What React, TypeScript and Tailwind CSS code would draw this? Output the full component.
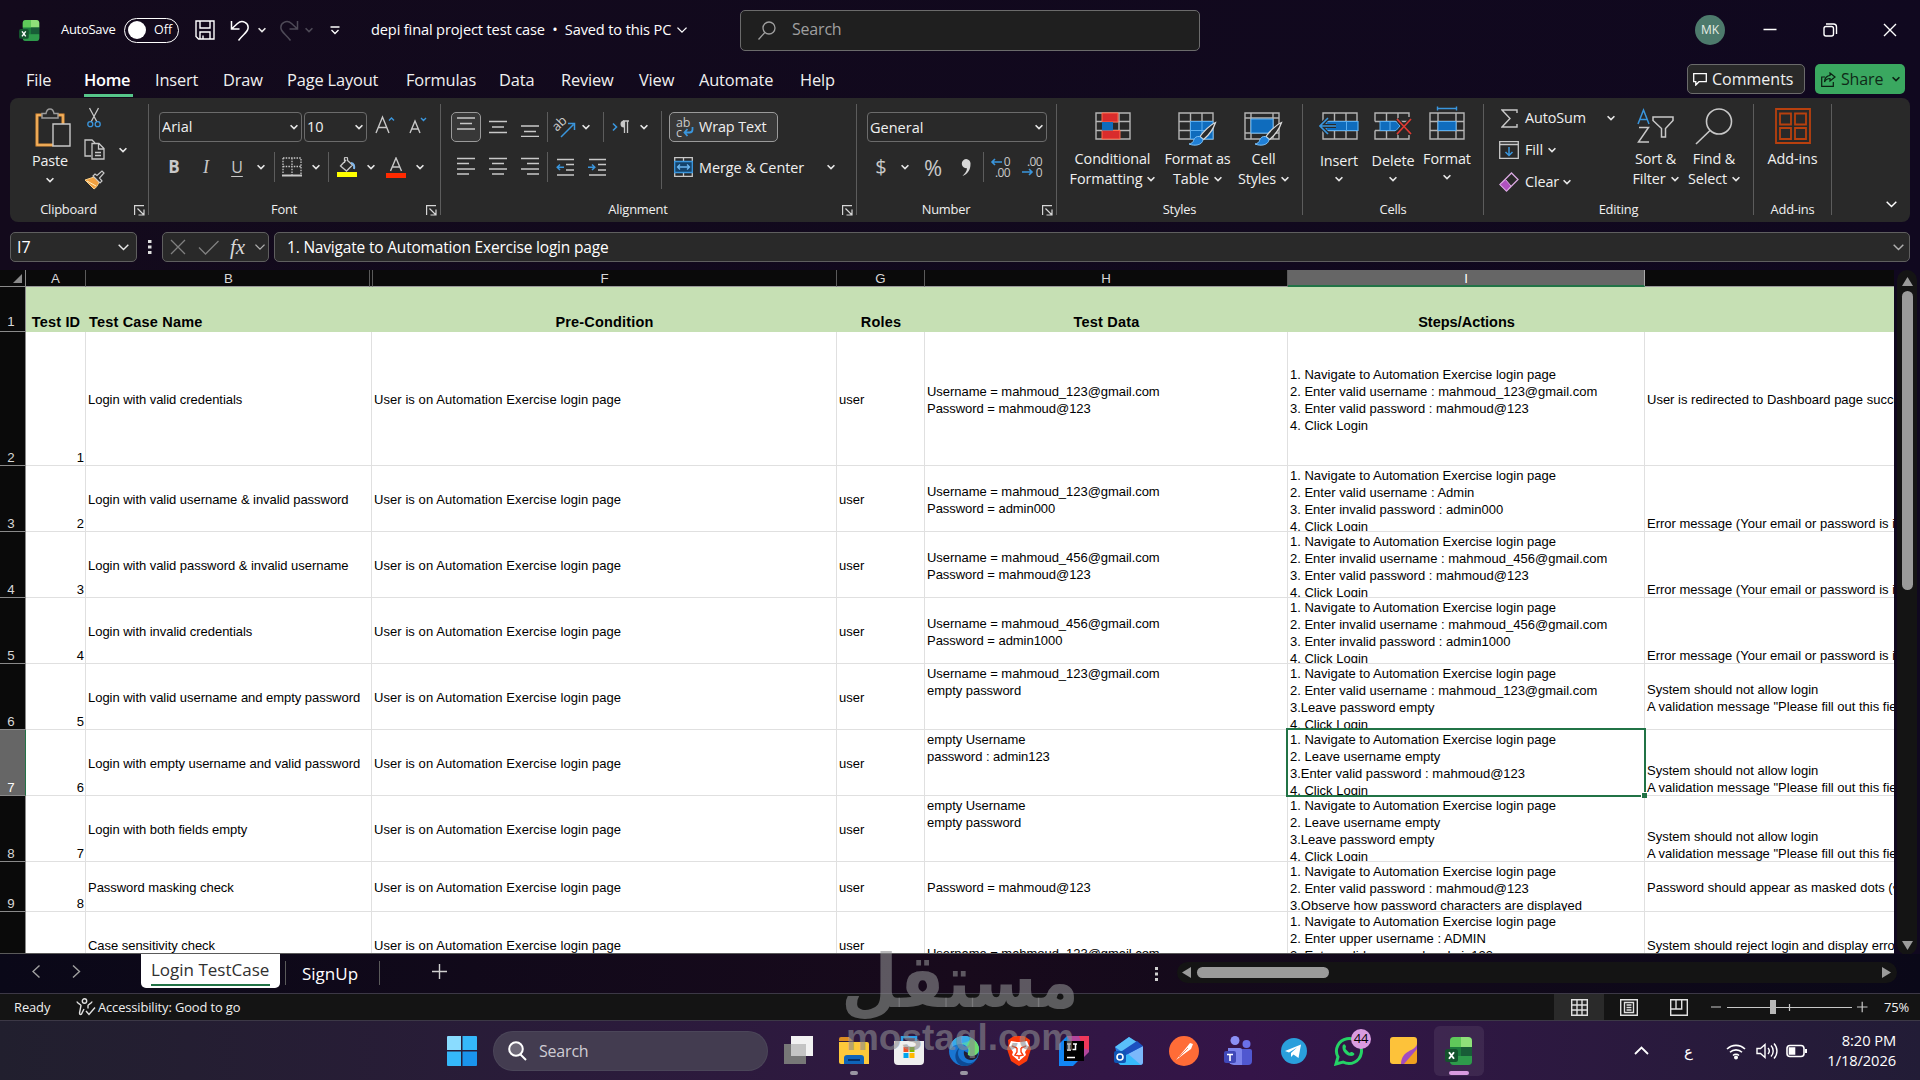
import type { ReactNode } from "react";

const ui = "font-['Open_Sans','Noto_Sans',sans-serif]";

const Chevron = ({ className = "", size = 8, stroke = "#e8e8e8" }: { className?: string; size?: number; stroke?: string }) => (
  <svg width={size} height={size / 2 + 2} viewBox="0 0 8 6" className={`shrink-0 ${className}`} fill="none" stroke={stroke} strokeWidth={size > 10 ? 1 : 1.6}>
    <path d="M0.6 1.2 4 4.6 7.4 1.2" />
  </svg>
);

/* ---------- ribbon building blocks ---------- */

const Group = ({ label, launcher, className, children }: { label: string; launcher?: boolean; className: string; children: ReactNode }) => (
  <section className={`flex flex-col shrink-0 h-[124px] ${className}`}>
    <div className="flex h-full">
      <div className="flex flex-col flex-1">
        <div className="flex h-[101px]">{children}</div>
        <div className="flex h-[23px] items-start text-[12.9px] leading-[21px] tracking-[-0.2px]">
          <span className="flex-1 text-center">{label}</span>
          {launcher && (
            <svg width="11" height="11" viewBox="0 0 11 11" className="ml-[7px] mr-[3px] mt-[6px]" fill="none" stroke="#d6d6d6" strokeWidth="1.2">
              <path d="M0.6 10V0.6H10M3.5 3.5 9.5 9.5M10 4.5V10H4.5" />
            </svg>
          )}
        </div>
      </div>
      <div className="w-px h-[111px] mt-[6px] bg-[#5c5c5c]" />
    </div>
  </section>
);

const Box = ({ w, children }: { w: string; children?: ReactNode }) => (
  <span className={`flex items-center justify-center shrink-0 h-[30px] ${w}`}>{children}</span>
);

const Sep = () => <span className="w-px h-[30px] shrink-0 bg-[#5c5c5c]" />;

const Lines = ({ rows }: { rows: number[][] }) => (
  <svg width="20" height="20" viewBox="0 0 20 20" stroke="#c8c8c8" strokeWidth="1.5">
    {rows.map(([x1, x2, y], i) => <path key={i} d={`M${x1} ${y}H${x2}`} />)}
  </svg>
);

const Big = ({ w, icon, lines, arrowBelow }: { w: string; icon: ReactNode; lines: string[]; arrowBelow?: string }) => (
  <div className={`flex flex-col items-center shrink-0 text-[14.4px] leading-[20px] tracking-[-0.1px] ${w}`}>
    <div className="h-[51px] flex items-end justify-center pb-[2px]">{icon}</div>
    <div className={`whitespace-nowrap ${arrowBelow ?? ""}`}>{lines[0]}</div>
    {arrowBelow ? (
      <Chevron className="mt-[5px]" />
    ) : (
      lines[1] && (
        <div className="flex items-center gap-[5px] whitespace-nowrap">
          {lines[1]}
          <Chevron />
        </div>
      )
    )}
  </div>
);

/* ---------- icons ---------- */

const ExcelLogo = ({ size }: { size: number }) => (
  <svg width={size} height={size} viewBox="0 0 28 28">
    <rect x="5" y="0" width="22" height="28" rx="4" fill="#1b7a3c" />
    <path d="M5 10V4a4 4 0 0 1 4-4h7v10z" fill="#5fc95a" />
    <path d="M16 0h7a4 4 0 0 1 4 4v6H16z" fill="#8fe07a" />
    <path d="M16 10h11v9H16z" fill="#185c37" />
    <path d="M5 19h22v5a4 4 0 0 1-4 4H9a4 4 0 0 1-4-4z" fill="#2e9a4b" />
    <rect x="0" y="12" width="13" height="13" rx="2.5" fill="#14532d" />
    <path d="M4 15.2l5 6.6M9 15.2l-5 6.6" stroke="#fff" strokeWidth="1.9" />
  </svg>
);

const TableGrid = () => (
  <path d="M1 1h34v26H1zM1 9.5h34M1 18.5h34M12.5 1v26M24 1v26" fill="none" stroke="#b4b4b4" strokeWidth="1.4" />
);

const Brush = () => (
  <g>
    <path d="M37.5 10.5c-5 2-12 9-15.500 14l3.500 3c5-4 10-11 12-17z" fill="#292929" stroke="#d8d8d8" strokeWidth="1.3" />
    <path d="M21.5 24.5c-3-.5-5 1-6 4-.5 2-2 3-4.500 3.500 6 2.500 13.500 1 14-4.500z" fill="#1f7fd6" stroke="#7cc0f5" strokeWidth="1" />
  </g>
);

const PasteIcon = () => (
  <svg width="36" height="40" viewBox="0 0 36 40" fill="none">
    <path d="M9 7H2v30h16M21 7h7v9" stroke="#e8953a" strokeWidth="3" />
    <path d="M9 7H2v30h16M21 7h7v9" stroke="#f8cf8a" strokeWidth="0.7" />
    <path d="M7 10h16V5.5h-4C18.5 2.5 17 1 15 1s-3.500 1.500-4 4.500H7z" fill="#292929" stroke="#9a9a9a" strokeWidth="1.5" />
    <path d="M18 16h17v22H18z" fill="#292929" stroke="#c8c8c8" strokeWidth="1.4" />
  </svg>
);

const CutIcon = () => (
  <svg width="14" height="21" viewBox="0 0 14 21" fill="none" strokeWidth="1.3">
    <path d="M2.5 1 10 15M11.5 1 4 15" stroke="#c8c8c8" />
    <circle cx="3.3" cy="17.2" r="2.5" stroke="#3a96dd" />
    <circle cx="10.7" cy="17.2" r="2.5" stroke="#3a96dd" />
  </svg>
);

const CopyIcon = () => (
  <svg width="21" height="21" viewBox="0 0 21 21" fill="none" stroke="#c8c8c8" strokeWidth="1.3">
    <path d="M7 17H1V1h7l3 3" />
    <path d="M8 4.5h7l5 5V20H8zM14.5 4.5V10H20M11 13.5h6M11 16.5h6" />
  </svg>
);

const PainterIcon = () => (
  <svg width="21" height="20" viewBox="0 0 21 20" fill="none">
    <path d="M1 10l9-3 5 5c-1 3-3 6-5 7z" fill="#f0a040" stroke="#f8d08a" />
    <path d="M3 11l9 5" stroke="#fff0c0" />
    <path d="M9 6l7 7 2-2-2.500-3L20 3l-2-2-5 4.500L11 4z" fill="#292929" stroke="#c8c8c8" strokeWidth="1.2" />
  </svg>
);

const BordersIcon = () => (
  <svg width="20" height="20" viewBox="0 0 20 20" fill="none" stroke="#c8c8c8">
    <path d="M1 1h18v16M1 1v16M10 1v17M1 9.5h18" strokeDasharray="1.5 1.2" strokeWidth="1.3" />
    <path d="M0 18.5h20" strokeWidth="2" />
  </svg>
);

const FillIcon = () => (
  <svg width="20" height="20" viewBox="0 0 20 20" fill="none" stroke="#c8c8c8" strokeWidth="1.3">
    <path d="M9 3 3.5 9l6 5 6-6-5-4.500V1.500a1.500 1.500 0 0 0-3 0V6" />
    <path d="M14 6c3 0 3.500 3 3 6" stroke="#7fb8ee" strokeWidth="2" />
    <path d="M0 17.500h20" stroke="#ffff00" strokeWidth="5" />
  </svg>
);

const IndentIcon = ({ d }: { d: string }) => (
  <svg width="19" height="19" viewBox="0 0 19 19" fill="none" strokeWidth="1.5">
    <path d="M1 1.5h17M10 6.5h8M10 12h8M1 17h17" stroke="#c8c8c8" />
    <path d={d} stroke="#3a96dd" />
  </svg>
);

const DecimalIcon = ({ top, bottom, arrow }: { top: string; bottom: string; arrow: string }) => (
  <svg width="21" height="22" viewBox="0 0 21 22" className="overflow-visible" fill="#c8c8c8" fontFamily="Open Sans" fontSize="12" letterSpacing="-0.6">
    <text x="20" y="10" textAnchor="end">{top}</text>
    <text x="20" y="20.500" textAnchor="end">{bottom}</text>
    <path d={arrow} fill="none" stroke="#3a96dd" strokeWidth="1.6" />
  </svg>
);

/* ---------- sheet data ---------- */

type Row = {
  n: string;
  h: string;
  id: string;
  name: string;
  data: string;
  steps: string;
  result: string;
  dataAlign?: string;
  stepsAlign?: string;
  resultAlign?: string;
};

const pre = "User is on Automation Exercise login page";
const nav = "1. Navigate to Automation Exercise login page\n";

const rows: Row[] = [
  { n: "2", h: "h-[134px]", id: "1", name: "Login with valid credentials", data: "Username = mahmoud_123@gmail.com\nPassword = mahmoud@123", steps: nav + "2. Enter valid username : mahmoud_123@gmail.com\n3. Enter valid password : mahmoud@123\n4. Click Login", result: "User is redirected to Dashboard page successfully", stepsAlign: "items-center" },
  { n: "3", h: "h-[66px]", id: "2", name: "Login with valid username & invalid password", data: "Username = mahmoud_123@gmail.com\nPassword = admin000", steps: nav + "2. Enter valid username : Admin\n3. Enter invalid password : admin000\n4. Click Login", result: "Error message (Your email or password is incorrect)", resultAlign: "items-end" },
  { n: "4", h: "h-[66px]", id: "3", name: "Login with valid password & invalid username", data: "Username = mahmoud_456@gmail.com\nPassword = mahmoud@123", steps: nav + "2. Enter invalid username : mahmoud_456@gmail.com\n3. Enter valid password : mahmoud@123\n4. Click Login", result: "Error message (Your email or password is incorrect)", resultAlign: "items-end" },
  { n: "5", h: "h-[66px]", id: "4", name: "Login with invalid credentials", data: "Username = mahmoud_456@gmail.com\nPassword = admin1000", steps: nav + "2. Enter invalid username : mahmoud_456@gmail.com\n3. Enter invalid password : admin1000\n4. Click Login", result: "Error message (Your email or password is incorrect)", resultAlign: "items-end" },
  { n: "6", h: "h-[66px]", id: "5", name: "Login with valid username and empty password", data: "Username = mahmoud_123@gmail.com\nempty password", steps: nav + "2. Enter valid username : mahmoud_123@gmail.com\n3.Leave password empty\n4. Click Login", result: 'System should not allow login\nA validation message "Please fill out this field"', dataAlign: "items-start" },
  { n: "7", h: "h-[66px]", id: "6", name: "Login with empty username and valid password", data: "empty Username\npassword : admin123", steps: nav + "2. Leave username empty\n3.Enter valid password : mahmoud@123\n4. Click Login", result: 'System should not allow login\nA validation message "Please fill out this field"', dataAlign: "items-start", resultAlign: "items-end" },
  { n: "8", h: "h-[66px]", id: "7", name: "Login with both fields empty", data: "empty Username\nempty password", steps: nav + "2. Leave username empty\n3.Leave password empty\n4. Click Login", result: 'System should not allow login\nA validation message "Please fill out this field"', dataAlign: "items-start", resultAlign: "items-end" },
  { n: "9", h: "h-[50px]", id: "8", name: "Password masking check", data: "Password = mahmoud@123", steps: nav + "2. Enter valid password : mahmoud@123\n3.Observe how password characters are displayed", result: "Password should appear as masked dots (•••)" },
  { n: "", h: "h-[66px]", id: "", name: "Case sensitivity check", data: "Username = mahmoud_123@gmail.com", steps: nav + "2. Enter upper username : ADMIN\n3. Enter valid password : admin123", result: "System should reject login and display error", dataAlign: "items-end pb-[16px]" },
];

const Cell = ({ w, align = "items-center", children }: { w: string; align?: string; children?: ReactNode }) => (
  <div className={`flex shrink-0 overflow-hidden border-r border-b border-[#e0e0e0] pl-[2px] whitespace-pre ${w} ${align}`}>
    <span className="translate-y-px">{children}</span>
  </div>
);

const headings = [
  { t: "Test ID", c: "w-[60px] text-center" },
  { t: "Test Case Name", c: "w-[286px] pl-[3px]" },
  { t: "Pre-Condition", c: "w-[465px] text-center" },
  { t: "Roles", c: "w-[88px] text-center" },
  { t: "Test Data", c: "w-[363px] text-center" },
  { t: "Steps/Actions", c: "w-[357px] text-center tracking-normal" },
];

const columns = [
  { t: "A", c: "w-[60px]" },
  { t: "B", c: "w-[284px] pl-[2px]" },
  { t: "", c: "w-[3px]" },
  { t: "F", c: "w-[464px]" },
  { t: "G", c: "w-[88px]" },
  { t: "H", c: "w-[363px]" },
];

const menu = [
  { t: "File", w: "w-[58px]" },
  { t: "Home", w: "w-[71px]" },
  { t: "Insert", w: "w-[68px]" },
  { t: "Draw", w: "w-[64px]" },
  { t: "Page Layout", w: "w-[119px]" },
  { t: "Formulas", w: "w-[93px]" },
  { t: "Data", w: "w-[62px]" },
  { t: "Review", w: "w-[78px]" },
  { t: "View", w: "w-[60px]" },
  { t: "Automate", w: "w-[101px]" },
  { t: "Help", w: "w-[60px]" },
];

function TitleBar() {
  return (
    <header className="flex items-center h-[60px] pl-[19px] text-[14px] text-white">
      <ExcelLogo size={21} />
      <span className="ml-[21px] w-[63px] text-[13px] tracking-[-0.3px]">AutoSave</span>
      <span className="flex items-center w-[55px] h-[25px] rounded-full border border-white pl-[3px] text-[12.5px]">
        <span className="w-[18px] h-[18px] rounded-full bg-white mr-[8px]" />Off
      </span>
      <svg width="20" height="20" viewBox="0 0 20 20" className="ml-[16px]" fill="none" stroke="#fff" strokeWidth="1.4">
        <path d="M1 1h18v18H3.5L1 16.5zM5 1v7h10V1M5 19v-7h10v7M8 15.5v3.500" />
      </svg>
      <svg width="20" height="21" viewBox="0 0 20 21" className="ml-[15px]" fill="none" stroke="#fff" strokeWidth="1.5">
        <path d="M1.5 1v8h8M1.5 9l6-5.500c5-4.500 11.500 0 10.500 5-.7 4-5 6-9.500 12" />
      </svg>
      <Chevron className="ml-[8px]" />
      <svg width="20" height="21" viewBox="0 0 20 21" className="ml-[13px]" fill="none" stroke="#4e4a57" strokeWidth="1.5">
        <path d="M18.5 1v8h-8M18.5 9l-6-5.500c-5-4.500-11.500 0-10.500 5 .7 4 5 6 9.500 12" />
      </svg>
      <Chevron className="ml-[6px]" stroke="#4e4a57" />
      <svg width="10" height="9" viewBox="0 0 10 9" className="ml-[17px]" fill="none" stroke="#fff" strokeWidth="1.3">
        <path d="M0.5 1h9M1.5 4 5 7.5 8.5 4" />
      </svg>
      <span className="ml-[31px] w-[304px] whitespace-nowrap text-[14.6px] tracking-[-0.14px]">depi final project test case&nbsp; •&nbsp; Saved to this PC</span>
      <Chevron size={12} stroke="#fff" className="ml-[1px]" />
      <div className="flex items-center ml-[52px] w-[460px] h-[41px] rounded-[5px] border border-[#6b6b6b] bg-[#1f1f1f] pl-[17px] text-[16px] tracking-[-0.2px] text-[#9f9f9f]">
        <svg width="18" height="19" viewBox="0 0 18 19" fill="none" stroke="#9f9f9f" strokeWidth="1.3">
          <circle cx="11" cy="7" r="6" />
          <path d="M6.800 11.5 0.5 18.5" />
        </svg>
        <span className="ml-[16px] -mt-[2px]">Search</span>
      </div>
      <span className="ml-[495px] flex items-center justify-center w-[30px] h-[30px] rounded-full bg-[#4d7a6c] text-[12px] text-[#e6eee6]">MK</span>
      <svg width="134" height="14" viewBox="0 0 134 14" className="ml-[38px]" fill="none" stroke="#fff" strokeWidth="1.4">
        <path d="M0.5 6.5h13M121 1l12 12M133 1l-12 12" />
        <rect x="61" y="3.5" width="9.5" height="9.5" rx="2" />
        <path d="M63 1h7.500a3 3 0 0 1 3 3v7" />
      </svg>
    </header>
  );
}

function MenuBar() {
  return (
    <nav className="flex items-center h-[38px] pl-[26px] text-[16.4px] tracking-[-0.15px] text-[#f0f0f0]">
      {menu.map(m => (
        <span key={m.t} className={`${m.w} shrink-0 whitespace-nowrap`}>
          {m.t === "Home" ? (
            <span className="inline-block w-[49px] h-[31px] pt-[2px] leading-[24px] mt-[4px] font-semibold tracking-[-0.3px] text-white border-b-[3px] border-[#56c58a]">{m.t}</span>
          ) : (
            <span className="inline-block pt-[2px]">{m.t}</span>
          )}
        </span>
      ))}
      <button className="flex items-center ml-auto w-[118px] h-[30px] rounded-[5px] border border-[#6b6b6b] bg-[#292929] pl-[5px] text-[16px] tracking-[0px] font-medium">
        <svg width="14" height="13" viewBox="0 0 14 13" className="mr-[5px]" fill="none" stroke="#fff" strokeWidth="1.3">
          <path d="M0.7 0.7h12.600v8H6L2.800 12V8.700H0.7z" />
        </svg>
        Comments
      </button>
      <button className="flex items-center ml-[10px] mr-[15px] w-[90px] h-[30px] rounded-[5px] bg-[#3aa860] pl-[6px] text-[16px] text-[#0f2a18]">
        <svg width="15" height="15" viewBox="0 0 15 15" className="mr-[5px]" fill="none" stroke="#0b2012" strokeWidth="1.2">
          <path d="M4 5H0.7v9.300h11.600V10M9 1l5 4-5 4V6.500C6 6.500 4.500 8 3.500 10 3.500 6 6 3.500 9 3.500z" />
        </svg>
        Share
        <Chevron stroke="#0b2012" className="ml-[9px]" />
      </button>
    </nav>
  );
}

function Ribbon() {
  return (
    <div className="flex mx-[10px] h-[124px] rounded-[8px] bg-[#292929] text-[#f0f0f0]">
      <Group label="Clipboard" launcher className="w-[139px]">
        <div className="flex flex-col items-center w-[74px] pl-[6px] text-[14.4px] leading-[20px] tracking-[-0.1px]">
          <div className="pt-[10px] pl-[6px] h-[53px]"><PasteIcon /></div>
          Paste
          <Chevron className="mt-[6px]" />
        </div>
        <div className="flex flex-col w-[32px] pt-[9px]">
          <div className="h-[32px] pl-[3px]"><CutIcon /></div>
          <div className="h-[31px]"><CopyIcon /></div>
          <PainterIcon />
        </div>
        <Chevron className="mt-[49px] ml-[3px]" />
      </Group>

      <Group label="Font" launcher className="w-[292px]">
        <div className="flex flex-col gap-[10px] pt-[14px] pl-[10px]">
          <div className="flex">
            <div className="flex items-center w-[143px] h-[30px] rounded-[4px] border border-[#6b6b6b] pl-[2px] pr-[3px] text-[14.5px]">
              <span className="flex-1">Arial</span><Chevron />
            </div>
            <div className="flex items-center ml-[2px] w-[63px] h-[30px] rounded-[4px] border border-[#6b6b6b] pl-[2px] pr-[3px] text-[14.5px]">
              <span className="flex-1">10</span><Chevron />
            </div>
            <svg width="60" height="24" viewBox="0 0 60 24" className="ml-[8px] mt-[1px]" fill="none" stroke="#c8c8c8" strokeWidth="1.4">
              <path d="M1 20 7.500 4 14 20M3.500 14.500h8M35 20l5-12 5 12M37 16h6.500" />
              <path d="M14 7.500 16.500 5 19 7.500M46 5l2.500 2.500L51 5" stroke="#3a96dd" />
            </svg>
          </div>
          <div className="flex text-[#c8c8c8]">
            <Box w="w-[30px]"><b className="text-[17px]">B</b></Box>
            <Box w="w-[34px]"><i className="text-[18px] font-['Liberation_Serif',serif]">I</i></Box>
            <Box w="w-[28px]"><span className="text-[16px] underline underline-offset-[3px]">U</span></Box>
            <Box w="w-[20px]"><Chevron /></Box>
            <Box w="w-[3px]" />
            <Sep />
            <Box w="w-[33px]"><BordersIcon /></Box>
            <Box w="w-[15px]"><Chevron /></Box>
            <Box w="w-[5px]" />
            <Sep />
            <Box w="w-[35px]"><FillIcon /></Box>
            <Box w="w-[13px]"><Chevron /></Box>
            <Box w="w-[38px]">
              <svg width="20" height="21" viewBox="0 0 20 21" fill="none" stroke="#c8c8c8" strokeWidth="1.4">
                <path d="M4.500 14 10 1l5.500 13M6.500 10h7" />
                <path d="M0 18.500h20" stroke="#ff2a00" strokeWidth="5" />
              </svg>
            </Box>
            <Box w="w-[10px]"><Chevron /></Box>
          </div>
        </div>
      </Group>

      <Group label="Alignment" launcher className="w-[416px]">
        <div className="flex flex-col gap-[10px] pt-[14px] pl-[10px] w-[220px]">
          <div className="flex">
            <span className="flex items-start justify-center w-[30px] h-[30px] rounded-[5px] border border-[#9a9a9a] bg-[#383838] pt-[3px]">
              <Lines rows={[[1, 19, 2], [4, 16, 7.5], [1, 19, 13]]} />
            </span>
            <Box w="w-[34px]"><Lines rows={[[1, 19, 4.5], [4, 16, 10], [1, 19, 15.5]]} /></Box>
            <Box w="w-[30px]"><Lines rows={[[1, 19, 9], [4, 16, 14.5], [1, 19, 19.5]]} /></Box>
            <Box w="w-[2px]" />
            <Sep />
            <Box w="w-[34px]">
              <svg width="20" height="21" viewBox="0 0 20 21" className="overflow-visible" fill="none">
                <text x="2" y="15" transform="rotate(-45 2 15)" fontSize="13" fill="#c8c8c8" fontFamily="Open Sans">ab</text>
                <path d="M6 20 18.500 7.500M13 6.500h6.500V13" stroke="#3a96dd" strokeWidth="1.5" />
              </svg>
            </Box>
            <Box w="w-[8px]"><Chevron /></Box>
            <Box w="w-[13px]" />
            <Sep />
            <Box w="w-[34px]">
              <svg width="18" height="16" viewBox="0 0 18 16" fill="none" strokeWidth="1.6">
                <path d="M1 4.500 4.500 8 1 11.500" stroke="#3a96dd" />
                <path d="M17 2H11M12.500 2v12M15.500 2v12" stroke="#c8c8c8" strokeWidth="1.3" />
                <path d="M12 1.500a3.500 3.500 0 0 0 0 7z" fill="#c8c8c8" />
              </svg>
            </Box>
            <Box w="w-[12px]"><Chevron /></Box>
          </div>
          <div className="flex">
            <Box w="w-[29px]"><Lines rows={[[1, 19, 1.5], [1, 13, 6.5], [1, 19, 12], [1, 13, 17]]} /></Box>
            <Box w="w-[35px]"><Lines rows={[[1, 19, 1.5], [4, 16, 6.5], [1, 19, 12], [4, 16, 17]]} /></Box>
            <Box w="w-[29px]"><Lines rows={[[1, 19, 1.5], [7, 19, 6.5], [1, 19, 12], [7, 19, 17]]} /></Box>
            <Box w="w-[3px]" />
            <Sep />
            <Box w="w-[34px]"><IndentIcon d="M8 9.300H1.500M4 6.500 1.200 9.300 4 12" /></Box>
            <Box w="w-[30px]"><IndentIcon d="M0 9.300H6.500M4 6.500 6.800 9.300 4 12" /></Box>
          </div>
        </div>
        <span className="w-px h-[78px] mt-[13px] bg-[#5c5c5c]" />
        <div className="flex flex-col gap-[10px] pt-[14px] pl-[7px] text-[14.4px] tracking-[-0.1px]">
          <div className="flex items-center w-[109px] h-[30px] rounded-[5px] border border-[#9a9a9a] bg-[#383838] pl-[6px] whitespace-nowrap">
            <svg width="18" height="21" viewBox="0 0 18 21" className="mr-[5px] overflow-visible" fill="#c8c8c8" fontFamily="Open Sans" fontSize="12.5">
              <text x="0" y="10">ab</text>
              <text x="0" y="20">c</text>
              <path d="M16.500 10v2.500c0 2-1 3-3 3H9M11.500 12 8.500 15.500 11.500 19" fill="none" stroke="#3a96dd" strokeWidth="1.8" />
            </svg>
            Wrap Text
          </div>
          <div className="flex items-center h-[30px] pl-[5px] whitespace-nowrap">
            <svg width="19" height="20" viewBox="0 0 19 20" className="mr-[6px]" fill="none" stroke="#c8c8c8" strokeWidth="1.3">
              <path d="M0.7 0.7h17.600v18.600H0.7zM9.500 1v4M9.500 15v4" />
              <path d="M0.7 4.500h17.600v11H0.7z" fill="#14436b" stroke="#3a96dd" />
              <path d="M3.500 10h12M6 7.500 3.500 10 6 12.500M13 7.500l2.500 2.500-2.500 2.500" stroke="#6bb5ee" />
            </svg>
            <span className="pt-[1px] w-[128px] tracking-[-0.05px]">Merge &amp; Center</span>
            <Chevron />
          </div>
        </div>
      </Group>

      <Group label="Number" launcher className="w-[200px]">
        <div className="flex flex-col gap-[10px] pt-[14px] pl-[10px]">
          <div className="flex items-center w-[180px] h-[30px] rounded-[4px] border border-[#6b6b6b] pl-[2px] pr-[3px] text-[14.5px]">
            <span className="flex-1 pt-[1px]">General</span><Chevron />
          </div>
          <div className="flex text-[#c8c8c8]">
            <Box w="w-[28px]"><span className="text-[20px]">$</span></Box>
            <Box w="w-[20px]"><Chevron /></Box>
            <Box w="w-[36px]"><span className="text-[22px]">%</span></Box>
            <Box w="w-[30px]">
              <svg width="10" height="17" viewBox="0 0 10 17"><path d="M5 0a4.500 4.500 0 0 1 4.500 5c0 6-3 10-8 12C4 14.500 6 12 6 9.300A4.600 4.600 0 1 1 5 0z" fill="#d8d8d8" /></svg>
            </Box>
            <Box w="w-[2px]" />
            <Sep />
            <Box w="w-[32px]"><DecimalIcon top="0" bottom=".00" arrow="M12 6H2M5 3 2 6 5 9" /></Box>
            <Box w="w-[32px]"><DecimalIcon top=".00" bottom="0" arrow="M0 16h10M7 13 10 16 7 19" /></Box>
          </div>
        </div>
      </Group>

      <Group label="Styles" className="w-[246px]">
        <Big w="w-[111px]" lines={["Conditional", "Formatting"]} icon={
          <svg width="36" height="35" viewBox="0 0 36 35">
            <TableGrid />
            <path d="M7 1h16v9H7zM7 18.500h18V27H7z" fill="#d92c2c" stroke="#ff6a4a" />
            <path d="M7 10h11v8.500H7z" fill="#0f6cbd" />
          </svg>
        } />
        <Big w="w-[59px]" lines={["Format as", "Table"]} icon={
          <svg width="39" height="35" viewBox="0 0 39 35">
            <TableGrid />
            <path d="M12.500 9.500H35V27H12.500z" fill="#0f6cbd" stroke="#5aaef0" />
            <path d="M12.500 18.500H35M24 9.500V27" stroke="#5aaef0" />
            <Brush />
          </svg>
        } />
        <Big w="w-[73px]" lines={["Cell", "Styles"]} icon={
          <svg width="39" height="35" viewBox="0 0 39 35">
            <path d="M1 1h34v26H1zM1 6h34M1 21h34M7 1v26M29 1v26" fill="none" stroke="#b4b4b4" strokeWidth="1.4" />
            <path d="M7 7h22v14H7z" fill="#0f6cbd" stroke="#5aaef0" />
            <Brush />
          </svg>
        } />
      </Group>

      <Group label="Cells" className="w-[181px]">
        <Big w="w-[72px]" arrowBelow="mt-[2px]" lines={["Insert"]} icon={
          <svg width="40" height="35" viewBox="-3 0 40 35">
            <TableGrid />
            <path d="M4 9.500h32v9H4z" fill="#0f6cbd" stroke="#5aaef0" strokeWidth="1.2" />
            <path d="M24.500 9.500v9" stroke="#5aaef0" />
            <path d="M14 14H-2M6 6-2 14 6 22" fill="none" stroke="#292929" strokeWidth="4" />
            <path d="M14 14H-2M6 6-2 14 6 22" fill="none" stroke="#3a96dd" strokeWidth="1.6" />
          </svg>
        } />
        <Big w="w-[36px]" arrowBelow="mt-[2px]" lines={["Delete"]} icon={
          <svg width="38" height="35" viewBox="0 0 38 35">
            <path d="M1 9.500V1h34v4M1 18.500V27h34v-4M12.500 1v8M24 1v6M12.500 19v8M24 21v6M1 9.500h34M1 18.500h20" fill="none" stroke="#b4b4b4" strokeWidth="1.4" />
            <path d="M6 9.500h16l4 4.500-4 4.500H6z" fill="#0f6cbd" stroke="#5aaef0" />
            <path d="M16 9.500v9" stroke="#5aaef0" />
            <path d="M23 7l14 15M37 7 23 22" stroke="#292929" strokeWidth="4" />
            <path d="M23 7l14 15M37 7 23 22" stroke="#e03a32" strokeWidth="1.7" />
          </svg>
        } />
        <Big w="w-[72px]" arrowBelow="mt-0" lines={["Format"]} icon={
          <svg width="36" height="42" viewBox="0 -7 36 42">
            <path d="M1 1h34v26H1zM1 9.500h34M1 18.500h34M9 1v26M27 1v26" fill="none" stroke="#b4b4b4" strokeWidth="1.4" />
            <path d="M9 9.500h18v9H9z" fill="#0f6cbd" stroke="#5aaef0" />
            <path d="M8.500-5.500v4M27.500-5.500v4M8.500-3.500h19" stroke="#3a96dd" strokeWidth="1.4" />
          </svg>
        } />
      </Group>

      <Group label="Editing" className="w-[270px]">
        <div className="flex flex-col w-[138px] pt-[4px] pl-[15px] text-[14.4px] tracking-[-0.1px]">
          <div className="flex items-center h-[32px] pl-[2px]">
            <svg width="17" height="19" viewBox="0 0 17 19" className="mr-[7px]" fill="none" stroke="#c8c8c8" strokeWidth="1.4">
              <path d="M16 4V1H1l8 8.500L1 18h15v-3" />
            </svg>
            AutoSum
            <Chevron className="ml-auto mr-[7px]" />
          </div>
          <div className="flex items-center h-[32px]">
            <svg width="20" height="18" viewBox="0 0 20 18" className="mr-[6px]" fill="none" stroke="#c8c8c8" strokeWidth="1.3">
              <path d="M0.7 0.7h18.600v16.600H0.7zM0.7 3.500h18.600" />
              <path d="M10 6v8.500M6.500 11l3.500 3.500 3.500-3.500" stroke="#3a96dd" strokeWidth="1.5" />
            </svg>
            Fill
            <Chevron className="ml-[5px]" />
          </div>
          <div className="flex items-center h-[32px]">
            <svg width="20" height="20" viewBox="0 0 20 20" className="mr-[6px]" fill="none">
              <path d="M1 12.500 12.500 1l6.500 6.500L7.500 19z" stroke="#d9a8e0" strokeWidth="1.3" />
              <path d="M1 12.500 6.500 7.500l5.500 6.500-4.500 5z" fill="#b052c0" stroke="#d9a8e0" />
            </svg>
            Clear
            <Chevron className="ml-[4px]" />
          </div>
        </div>
        <Big w="w-[67px]" lines={["Sort &", "Filter"]} icon={
          <svg width="37" height="40" viewBox="0 0 37 40" fill="none" strokeWidth="1.5">
            <path d="M1 17 6.500 3 12 17M3 12.500h7" stroke="#3a96dd" />
            <path d="M2 20.500h9.500L1.500 35H12M16 10h20v3.500l-7.500 8V30h-4v-8.500L16 13.500z" stroke="#c8c8c8" />
          </svg>
        } />
        <Big w="w-[50px]" lines={["Find &", "Select"]} icon={
          <svg width="38" height="40" viewBox="0 0 38 40" fill="none" stroke="#c8c8c8" strokeWidth="1.6">
            <circle cx="24" cy="14.500" r="12.5" />
            <path d="M15 23.500 1 37" />
          </svg>
        } />
      </Group>

      <Group label="Add-ins" className="w-[78px]">
        <Big w="w-[77px]" lines={["Add-ins"]} icon={
          <svg width="36" height="39" viewBox="0 0 36 39" fill="none" stroke="#b8400e" strokeWidth="1.8">
            <path d="M1 1h34v34H1zM5 5.500h11v11H5zM20 5.500h11v11H20zM5 20h11v11H5zM20 20h11v11H20z" />
          </svg>
        } />
      </Group>
      <Chevron size={13} stroke="#fff" className="ml-auto mr-[12px] mt-[102px]" />
    </div>
  );
}

function FormulaBar() {
  return (
    <div className="flex items-center h-[30px] mt-[10px] mx-[10px] text-[15px] text-white">
      <div className="flex items-center w-[127px] h-full rounded-[5px] border border-[#5f5f5f] bg-[#292929] pl-[6px] pr-[6px]">
        <span className="flex-1 text-[16px]">I7</span>
        <Chevron size={13} />
      </div>
      <svg width="4" height="14" viewBox="0 0 4 14" className="ml-[11px]" fill="#e0e0e0"><path d="M0 0h3.500v3H0zM0 5.500h3.500v3H0zM0 11h3.500v3H0z" /></svg>
      <div className="flex items-center ml-[10px] w-[107px] h-full rounded-[5px] border border-[#5f5f5f] bg-[#292929] pl-[7px]">
        <svg width="50" height="16" viewBox="0 0 50 16" fill="none" stroke="#808080" strokeWidth="1.3">
          <path d="M1 1l14 14M15 1 1 15M29 8.500l6.500 6.500L48.500 2" />
        </svg>
        <i className="w-[21px] ml-[10px] text-[21px] leading-[20px] text-[#d8d8d8] font-['Liberation_Serif',serif]">fx</i>
        <Chevron size={12} stroke="#b0b0b0" className="ml-[3px]" />
      </div>
      <div className="flex items-center ml-[5px] flex-1 h-full rounded-[5px] border border-[#5f5f5f] bg-[#292929] pl-[12px] pr-[4px] text-[15.5px] tracking-[-0.19px]">
        <span className="flex-1 pt-[1px]">1. Navigate to Automation Exercise login page</span>
        <Chevron size={13} stroke="#b0b0b0" />
      </div>
    </div>
  );
}

function Sheet() {
  return (
    <div className="flex h-[684px] mt-[8px]">
      <div className="w-[1894px] shrink-0 overflow-hidden bg-white border-b border-[#5a5a5a] font-['Liberation_Sans',Arial,sans-serif] text-[13px] leading-[17px] text-black">
        <div className="flex h-[17px] bg-[#0a0a0a] text-[13.3px] text-[#d8d8d8]">
          <div className="w-[26px] shrink-0 border-r border-b border-[#8a8a8a] flex items-end justify-end pr-[3px] pb-[3px]">
            <svg width="9" height="9" viewBox="0 0 9 9"><path d="M9 0v9H0z" fill="#8a8a8a" /></svg>
          </div>
          {columns.map((c, i) => (
            <div key={i} className={`${c.c} shrink-0 border-r border-b border-r-[#5a5a5a] border-b-[#9a9a9a] text-center leading-[17px]`}>{c.t}</div>
          ))}
          <div className="w-[357px] shrink-0 bg-[#666] border-b-2 border-b-[#217346] border-r border-r-[#aaa] text-center text-white">I</div>
          <div className="flex-1 border-b border-[#9a9a9a]" />
        </div>

        <div className="flex h-[45px]">
          <div className="w-[26px] shrink-0 flex items-end justify-center pr-[3px] pb-[1px] bg-[#0a0a0a] border-r border-b border-[#8a8a8a] text-[13.3px] text-[#d8d8d8]">1</div>
          <div className="flex flex-1 items-end pb-[1px] bg-[#c6e0b4] text-[14.5px] tracking-[0.18px] font-bold">
            {headings.map(h => <div key={h.t} className={`${h.c} shrink-0 whitespace-nowrap`}>{h.t}</div>)}
          </div>
        </div>

        {rows.map(r => (
          <div key={r.name} className={`flex ${r.h}`}>
            <div className={`w-[26px] shrink-0 flex items-end justify-center pr-[3px] border-r border-b border-[#8a8a8a] text-[13.3px] ${r.n === "7" ? "bg-[#666] text-white border-r-[#217346]" : "bg-[#0a0a0a] text-[#d8d8d8]"}`}>
              <span className="translate-y-px">{r.n}</span>
            </div>
            <Cell w="w-[60px] justify-end pr-[1px]" align="items-end">{r.id}</Cell>
            <Cell w="w-[286px] tracking-[-0.04px]">{r.name}</Cell>
            <Cell w="w-[465px] tracking-[0.07px]">{pre}</Cell>
            <Cell w="w-[88px]">user</Cell>
            <Cell w="w-[363px] tracking-[-0.04px]" align={r.dataAlign}>{r.data}</Cell>
            {r.n === "7" ? (
              <div className="relative flex w-[357px] shrink-0">
                <Cell w="w-[357px]" align="items-start">{r.steps}</Cell>
                <span className="absolute -left-[2px] -top-[2px] w-[360px] h-[69px] border-2 border-[#217346]" />
                <span className="absolute -right-[2px] -bottom-[2px] w-[6px] h-[6px] bg-[#217346] border-t border-l border-white" />
              </div>
            ) : (
              <Cell w="w-[357px]" align={r.stepsAlign ?? "items-start"}>{r.steps}</Cell>
            )}
            <Cell w="w-[249px] border-r-0" align={r.resultAlign}>{r.result}</Cell>
          </div>
        ))}
      </div>
      <div className="flex flex-col items-center ml-[3px] w-[20px] h-[685px] rounded-[10px] bg-[#141414] pt-[7px] pb-[5px]">
        <svg width="11" height="9" viewBox="0 0 11 9"><path d="M5.500 0 11 9H0z" fill="#9a9a9a" /></svg>
        <span className="mt-[5px] w-[11px] h-[299px] rounded-full bg-[#9a9a9a]" />
        <svg width="11" height="9" viewBox="0 0 11 9" className="mt-auto"><path d="M5.500 9 11 0H0z" fill="#9a9a9a" /></svg>
      </div>
    </div>
  );
}

function SheetTabs() {
  return (
    <div className="flex h-[40px] border-b border-[#3c3846] bg-gradient-to-r from-[#0a0818] via-[#180a1c] to-[#0a0818] text-white">
      <div className="flex items-center w-[141px] pl-[32px] pb-[4px]">
        <svg width="50" height="13" viewBox="0 0 50 13" fill="none" stroke="#a0a0a0" strokeWidth="1.4"><path d="M7.500 0.5 1 6.500l6.500 6M41 0.5l6.500 6-6.500 6" /></svg>
      </div>
      <div className="w-[139px] h-[34px] rounded-b-[5px] bg-white px-[10px] text-[17px] leading-[31px] text-[#303030]">
        <div className="h-[32px] border-b-2 border-[#217346] whitespace-nowrap tracking-[0px] font-medium">Login TestCase</div>
      </div>
      <span className="ml-[5px] mt-[7px] w-px h-[24px] bg-[#5a5a5a]" />
      <span className="w-[93px] pl-[16px] text-[17px] leading-[40px] tracking-[0px]">SignUp</span>
      <span className="mt-[7px] w-px h-[24px] bg-[#5a5a5a]" />
      <svg width="15" height="15" viewBox="0 0 15 15" className="ml-[52px] mt-[10px]" stroke="#d0d0d0" strokeWidth="1.4"><path d="M7.500 0v15M0 7.500h15" /></svg>
      <svg width="4" height="14" viewBox="0 0 4 14" className="ml-[708px] mt-[13px]" fill="#d0d0d0"><path d="M0 0h3v3H0zM0 5.500h3v3H0zM0 11h3v3H0z" /></svg>
      <div className="flex items-center ml-[18px] mt-[8px] w-[720px] h-[21px] rounded-full bg-[#141414] pl-[5px] pr-[6px]">
        <svg width="9" height="11" viewBox="0 0 9 11"><path d="M0 5.500 9 0v11z" fill="#9a9a9a" /></svg>
        <span className="ml-[6px] w-[132px] h-[11px] rounded-full bg-[#9a9a9a]" />
        <svg width="9" height="11" viewBox="0 0 9 11" className="ml-auto"><path d="M9 5.500 0 0v11z" fill="#9a9a9a" /></svg>
      </div>
    </div>
  );
}

function StatusBar() {
  return (
    <div className="flex items-center h-[27px] border-b border-[#3c3846] bg-[#141414] pl-[14px] text-[12.9px] tracking-[-0.08px] text-[#f0f0f0]">
      <span className="w-[62px] pt-[1px]">Ready</span>
      <svg width="20" height="18" viewBox="0 0 20 18" fill="none" stroke="#e0e0e0" strokeWidth="1.4">
        <circle cx="8.500" cy="3" r="2.2" />
        <path d="M1 3.500c0 2 4 2.500 4 4L3.500 15c0 2 2 2 2.500 0L8 11M16 3.500c0 2-4 2.500-4 4v3M10 13l3 3.500 6-7" />
      </svg>
      <span className="ml-[2px] pt-[1px] tracking-[-0.12px]">Accessibility: Good to go</span>
      <div className="flex items-center ml-auto h-full">
        <span className="flex items-center justify-center w-[50px] h-full bg-[#2a2a2a]">
          <svg width="17" height="17" viewBox="0 0 17 17" fill="none" stroke="#e0e0e0" strokeWidth="1.4"><path d="M0.7 0.7h15.600v15.600H0.7zM0.7 6h15.600M0.7 11h15.600M6 0.7v15.600M11 0.7v15.600" /></svg>
        </span>
        <span className="flex items-center justify-center w-[50px]">
          <svg width="18" height="17" viewBox="0 0 18 17" fill="none" stroke="#e0e0e0" strokeWidth="1.4"><path d="M0.7 0.7h16.600v15.600H0.7zM4.500 3.500h9v10h-9zM6.500 6h5M6.500 8.500h5M6.500 11h5" /></svg>
        </span>
        <span className="flex items-center justify-center w-[50px]">
          <svg width="18" height="17" viewBox="0 0 18 17" fill="none" stroke="#e0e0e0" strokeWidth="1.4"><path d="M0.7 0.7h16.600v15.600H0.7zM0.7 10h11V1M6 1v9" /></svg>
        </span>
        <svg width="160" height="16" viewBox="0 0 160 16" className="ml-[6px]" stroke="#c8c8c8" strokeWidth="1.2">
          <path d="M1 8h10M17 8.500h125M79.500 5v7M147 8h10.500M152.200 2.700v10.600" />
          <path d="M60 1h6v14h-6z" fill="#b8b8b8" stroke="none" />
        </svg>
        <span className="w-[26px] ml-[14px] mr-[10px] pt-[1px]">75%</span>
      </div>
    </div>
  );
}

const apps: { name: string; icon: ReactNode; open?: boolean }[] = [
  { name: "Task view", icon: <><path d="M7 0h22v20H7z" fill="#f2f2f2" /><path d="M0 8h22v20H0z" fill="#777" /><path d="M7 8h15v12H7z" fill="#c4c4c4" /></> },
  { name: "File Explorer", open: true, icon: <><path d="M0 3a2 2 0 0 1 2-2h8l4 4H0z" fill="#d98c22" /><path d="M0 6h28a2 2 0 0 1 2 2v20H2a2 2 0 0 1-2-2z" fill="#fdc93a" /><path d="M5 28v-6a3 3 0 0 1 3-3h14a3 3 0 0 1 3 3v6z" fill="#0f64b8" /><path d="M9 24h12" stroke="#052f66" strokeWidth="2" /></> },
  { name: "Store", icon: <><path d="M8 6V1h14v5" fill="none" stroke="#2ba0ea" strokeWidth="2.5" /><path d="M0 5h30v20a4 4 0 0 1-4 4H4a4 4 0 0 1-4-4z" fill="#efefef" /><path d="M9.500 11h5v5h-5z" fill="#f25022" /><path d="M15.500 11h5v5h-5z" fill="#7fba00" /><path d="M9.500 17h5v5h-5z" fill="#00a4ef" /><path d="M15.500 17h5v5h-5z" fill="#ffb900" /></> },
  { name: "Edge", open: true, icon: <><circle cx="15" cy="15" r="15" fill="#1976d2" /><path d="M2 8C5 2 10 0 15 0c9 0 15 7 15 13 0 5-4 7-8 7-3 0-4-1.500-3-3 2-4-2-9-8-9-4 0-7 1-10 5z" fill="#4cc9c0" /><path d="M22 2c5 3 8 7 8 11 0 5-4 7-8 7-3 0-4-1.500-3-3 2-4 0-6-1-8z" fill="#6bdc6e" /><path d="M2 8C5 2 10 0 15 0c3 0 5 1 7 2-2 5-8 4-11 6-4 0-8 2-10 6z" fill="#38a9ea" /><path d="M13 10c-5 2-7 14 5 17 4 1 7-1 9-3-3 5-8 6-12 6C5 29 3 15 13 10z" fill="#0d4a94" /><path d="M19 17c-1 1.500 0 3 3 3 3 0 5-.5 7-3 0 5-3 7-7 7-5 0-8-4-7-9z" fill="#221f33" /></> },
  { name: "Brave", icon: <><path d="M7 2 10 0h10l3 2 3 2-.5 5 1.500 4-4 12-8 5-8-5-4-12 1.500-4L4 4z" fill="#fb3b0c" /><path d="M7 5l6 1h4l6-1 2 5-4 6 1 3-7 6-7-6 1-3-4-6z" fill="#fff" /><path d="M8 10l5 2M22 10l-5 2M13 12v4l-2 3 4 1 4-1-2-3v-4M15 20v3" fill="none" stroke="#fb3b0c" strokeWidth="1.4" /></> },
  { name: "IntelliJ", icon: <><path d="M0 8 8 0h22v14L14 30H0z" fill="#1286f5" /><path d="M8 0h22v16l-8 8z" fill="#b4459b" /><path d="M20 0h10v14l-6-2z" fill="#f0385a" /><path d="M5 5h20v20H5z" fill="#000" /><path d="M8 8h4M10 8v6M8 14h4M14 8h4M16.500 8v5.500h-3M8 21.500h8" fill="none" stroke="#fff" strokeWidth="1.5" /></> },
  { name: "Outlook", icon: <><path d="M1 11 15 1l14 10v15a3 3 0 0 1-3 3H6z" fill="#2277e0" /><path d="M1 11 15 1l8 5L8 16z" fill="#5ac0fa" /><path d="M29 10v16a3 3 0 0 1-3 3L10 20z" fill="#7bb8fb" /><path d="M5 20l8-3 14 12H8a4 4 0 0 1-4-4z" fill="#37b9fb" /><path d="M8 15 23 5l6 5-17 9z" fill="#1c50c0" /><rect x="0" y="15" width="12" height="12" rx="2" fill="#0f55b5" /><circle cx="6" cy="21" r="3" fill="none" stroke="#fff" strokeWidth="1.6" /></> },
  { name: "Postman", icon: <><circle cx="15" cy="15" r="15" fill="#ff6c37" /><path d="M7 24 17 12l4-5 3 1-2 5-7 5z" fill="#fff" /><path d="M10 21l9-9" stroke="#ff6c37" strokeWidth="0.8" /></> },
  { name: "Teams", icon: <><circle cx="11" cy="4.500" r="4.5" fill="#8b90f5" /><circle cx="22.500" cy="8" r="4" fill="#6a70e8" /><path d="M17 13h9a2 2 0 0 1 2 2v10a4 4 0 0 1-4 4h-7z" fill="#5058d0" /><path d="M4 12h12a2 2 0 0 1 2 2v15H10a6 6 0 0 1-6-6z" fill="#7b83eb" /><rect x="0" y="15" width="12" height="12" rx="2" fill="#4048b8" /><path d="M3 18.500h6M6 18.500V25" stroke="#fff" strokeWidth="1.6" /></> },
  { name: "Telegram", icon: <><circle cx="15" cy="15" r="13" fill="#2a9fdc" /><path d="M6 15 22 8.500 19.500 22l-5-3.500-2.500 2.500v-4l6-5.500-8 5z" fill="#fff" /></> },
  { name: "WhatsApp", icon: <><path d="M2 28l2-7A12.500 12.500 0 1 1 9 26z" fill="none" stroke="#25d366" strokeWidth="3" /><path d="M9 9c1-1.500 2-1 3 1.500 0 1-1 2 0 3l3 3c1 .7 2-.7 3-.5 3 1.500 2.500 2 2 3C17 22 9 18 8.500 12 8.500 10.500 8.500 9.500 9 9z" fill="#25d366" /></> },
  { name: "Sticky Notes", icon: <><path d="M1 4a3 3 0 0 1 3-3h21a3 3 0 0 1 3 3v13L16 28H4a3 3 0 0 1-3-3z" fill="#fdc23a" /><path d="M28 8c-2 8-15 5-16 20h4l12-14z" fill="#a24cc0" /><path d="M28 13 15 28h10a3 3 0 0 0 3-3z" fill="#f0a020" /></> },
];

function Taskbar() {
  return (
    <footer className="flex items-center h-[59px] bg-gradient-to-r from-[#211f2e] from-0% via-[#341448] via-65% to-[#221c36] to-100% text-white">
      <svg width="30" height="30" viewBox="0 0 30 30" className="ml-[447px]">
        <path d="M0 1a1 1 0 0 1 1-1h13v14H0z" fill="#8adcff" />
        <path d="M15.500 0H29a1 1 0 0 1 1 1v13H15.500zM0 15.500h14V30H1a1 1 0 0 1-1-1z" fill="#35b8fa" />
        <path d="M15.500 15.500H30V29a1 1 0 0 1-1 1H15.500z" fill="#1a94ec" />
      </svg>
      <div className="flex items-center ml-[16px] w-[275px] h-[40px] rounded-full border border-[#54506180] bg-[#433c50] pl-[14px] text-[16px] tracking-[-0.2px] text-[#cfccd4]">
        <svg width="19" height="20" viewBox="0 0 19 20" fill="#6d6877" stroke="#fff" strokeWidth="2"><circle cx="8" cy="8" r="6.8" /><path d="M12.500 13.500 18 19" /></svg>
        <span className="ml-[12px]">Search</span>
      </div>
      <div className="flex items-center ml-[3px] h-full">
        {apps.map(a => (
          <div key={a.name} className="relative flex flex-col items-center justify-center w-[55px] h-full">
            <svg width="30" height="30" viewBox="0 0 30 30">{a.icon}</svg>
            {a.open && <span className="absolute bottom-[5px] w-[8px] h-[4px] rounded-full bg-[#9a96a2]" />}
            {a.name === "WhatsApp" && (
              <span className="absolute left-[30px] top-[8px] flex items-center justify-center w-[20px] h-[20px] rounded-full bg-[#d99be0] text-[13px] tracking-[-0.3px] text-black">44</span>
            )}
          </div>
        ))}
        <div className="relative flex items-center justify-center w-[50px] h-[50px] ml-[3px] rounded-[6px] bg-white/[0.07]">
          <ExcelLogo size={28} />
          <span className="absolute bottom-[1px] w-[20px] h-[4px] rounded-full bg-[#d99be0]" />
        </div>
      </div>
      <div className="flex items-center ml-auto pr-[24px]">
        <svg width="15" height="9" viewBox="0 0 15 9" fill="none" stroke="#fff" strokeWidth="1.8"><path d="M1 8 7.500 1.500 14 8" /></svg>
        <span className="ml-[35px] w-[9px] text-[15px] font-['DejaVu_Sans',sans-serif] mt-[4px]">ع</span>
        <svg width="82" height="20" viewBox="0 0 82 20" className="ml-[33px]" fill="none" stroke="#fff" strokeWidth="1.6">
          <path d="M1 8a13 13 0 0 1 18 0M4 11.300a8.600 8.600 0 0 1 12 0M7 14.500a4.300 4.300 0 0 1 6 0" />
          <circle cx="10" cy="16.500" r="1.2" fill="#fff" />
          <path d="M31 7.500h3.500L39 3.500v13l-4.500-4H31zM42 7a4.500 4.500 0 0 1 0 6M45 4.500a8 8 0 0 1 0 11M48 2.500a11 11 0 0 1 0 15" strokeWidth="1.4" />
          <rect x="61" y="4.500" width="17" height="11" rx="3" />
          <path d="M63.500 7h5v6h-5z" fill="#fff" />
          <path d="M80 8v4" strokeWidth="2" />
        </svg>
        <div className="w-[88px] -mt-[1px] text-right text-[14.7px] leading-[20px] tracking-[-0.1px]">8:20 PM<br />1/18/2026</div>
      </div>
    </footer>
  );
}

export default function App() {
  return (
    <main className={`relative flex flex-col w-[1920px] h-[1080px] overflow-hidden bg-gradient-to-r from-[#130a1c] to-[#10081f] ${ui}`}>
      <TitleBar />
      <MenuBar />
      <Ribbon />
      <FormulaBar />
      <Sheet />
      <SheetTabs />
      <StatusBar />
      <Taskbar />

      {/* watermark over the bottom bars */}
      <div className="absolute left-[845px] top-[944px] w-[230px] flex flex-col items-center text-[#8c8c90]/60 font-bold pointer-events-none">
        <span dir="rtl" className="text-[65px] leading-[76px] scale-y-[1.14] whitespace-nowrap font-['DejaVu_Sans',sans-serif]">مستقل</span>
        <span className="text-[37px] leading-[40px] -mt-[2px] whitespace-nowrap font-['Liberation_Sans',sans-serif]">mostaql.com</span>
      </div>
    </main>
  );
}
